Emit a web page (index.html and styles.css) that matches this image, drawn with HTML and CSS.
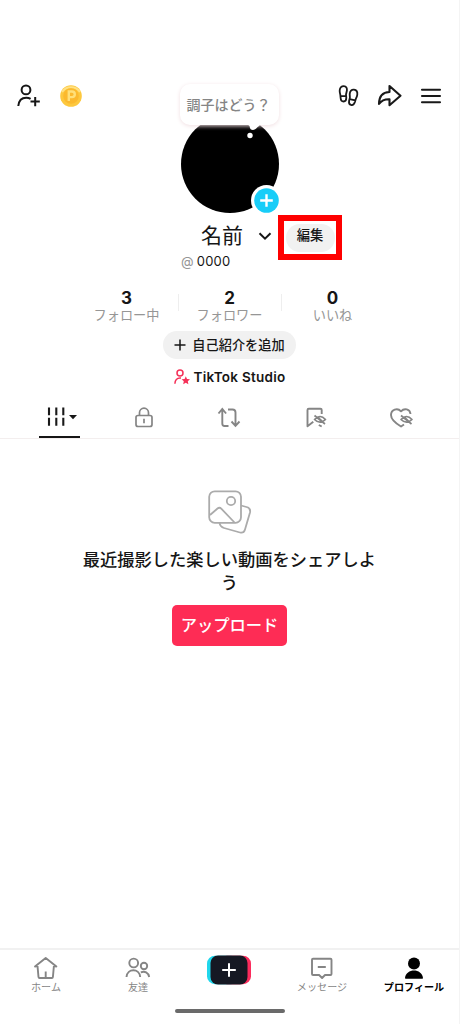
FILE: index.html
```html
<!DOCTYPE html>
<html lang="ja">
<head>
<meta charset="utf-8">
<title>プロフィール</title>
<link rel="stylesheet" href="styles.css">
</head>
<body>
<main class="screen">
  <header class="hero">
    <div class="actions actions-left">
      <svg width="26" height="26" viewBox="0 0 26 26" fill="none" stroke="#161616" stroke-width="2"><circle cx="10" cy="5.900" r="4.400"/><path d="M2.300 22c.5-5.400 3.400-8.300 7.900-8.300 1.800 0 3.200.4 4.400 1.200M14.500 17.500h9.300M19.200 12.900v9.300"/></svg>
      <svg width="22" height="22" viewBox="0 0 22 22"><circle cx="11" cy="11" r="10.800" fill="#fdc83e"/><path d="M2 7a10.800 10.800 0 0 1 18 0" fill="none" stroke="#ffe184" stroke-width="2"/><circle cx="11" cy="11" r="7.800" fill="#fbb92e"/><path d="M8.800 16V6.500h3.200a2.800 2.800 0 0 1 0 5.600H8.800" fill="none" stroke="#ffe07a" stroke-width="2.400"/></svg>
    </div>
    <div class="portrait">
      <div class="avatar"></div>
      <div class="bubble">調子はどう？</div>
      <svg class="tail" width="14" height="16" viewBox="0 0 14 16" fill="#fff"><path d="M0 0h14l-2 2c-3 2-3.500 4-6 4-2 0-3-1-3.500-4z"/><circle cx="3" cy="11.500" r="2.700"/></svg>
      <svg class="add" width="31" height="31" viewBox="0 0 31 31"><circle cx="15.500" cy="15.500" r="15.500" fill="#fff"/><circle cx="15.500" cy="15.500" r="12.300" fill="#18cdf8"/><path d="M9.200 15.500h12.600M15.500 9.200v12.600" stroke="#fff" stroke-width="2.400"/></svg>
    </div>
    <div class="actions actions-right">
      <svg width="22" height="24" viewBox="0 0 22 24" fill="none" stroke="#191919" stroke-width="1.800" stroke-linejoin="round"><path d="M6.800 2.100c2.500 0 3.400 2 3.100 4.400L9 10.500l.3 3.300c0 2.300-.8 3.700-2.700 3.700-2 0-2.900-1.500-3-3.800l-.3-3C2.800 9 2.500 7.700 2.700 6.200c.3-2.400 1.600-4.100 4.100-4.100zM3.500 12.100h5.600"/><path d="M17 5.700c2.500.3 3.600 2.300 3.300 5-.2 1.700-.9 3-1.500 4.200l-.9 3.200c-.7 2.200-1.900 3.300-3.800 2.900-1.900-.5-2.400-2-2-4.200l.8-3.200-.2-3.500c.1-2.800 1.900-4.700 4.300-4.400zM12.600 15.200l5.700 1.200"/></svg>
      <svg width="26" height="24" viewBox="0 0 26 24" fill="none" stroke="#191919" stroke-width="2.100" stroke-linejoin="round"><path d="M12.500 2v6C6.300 8.200 2 12 2 20c2.800-4 5.700-5 10.500-4.800v6L23.500 11.700z"/></svg>
      <svg width="20" height="24" viewBox="0 0 20 24" fill="none" stroke="#191919" stroke-width="2.100" stroke-linecap="round"><path d="M1 5.700h18M1 12h18M1 18.200h18"/></svg>
    </div>
  </header>

  <div class="name-row">
    <h1 class="name">名前</h1>
    <svg class="chevron" width="14" height="10" viewBox="0 0 14 10" fill="none" stroke="#161616" stroke-width="2"><path d="M1.500 1.200 7 6.700l5.500-5.500"/></svg>
    <div class="highlight"><button class="edit">編集</button></div>
  </div>
  <p class="handle"><span class="at">@</span>0000</p>

  <section class="stats">
    <div class="stat"><b>3</b><span>フォロー中</span></div>
    <div class="stat"><b>2</b><span>フォロワー</span></div>
    <div class="stat"><b>0</b><span>いいね</span></div>
  </section>

  <button class="bio">
    <svg width="12" height="12" viewBox="0 0 12 12" stroke="#161616" stroke-width="1.500"><path d="M.5 6h11M6 .5v11"/></svg>
    <span>自己紹介を追加</span>
  </button>
  <div class="studio">
    <svg width="16" height="16" viewBox="0 0 16 16" fill="none" stroke="#f53058" stroke-width="1.500"><circle cx="6" cy="4" r="3"/><path d="M.9 14.800c.2-3.500 1.900-5.800 5.100-5.800h1"/><path fill="#f53058" stroke="none" d="m11.800 7.300 1.200 2.700 3 .3-2.200 2 .6 2.900-2.600-1.500-2.600 1.500.6-2.900-2.200-2 3-.3z"/></svg>
    <span>TikTok Studio</span>
  </div>

  <nav class="tabs">
    <div class="tab tab-active"><svg width="32" height="22" viewBox="0 0 32 22"><path d="M5 2.500v7.800M12.300 2.500v7.800M19.300 2.500v7.800M5 12.700v8M12.300 12.700v8M19.300 12.700v8" stroke="#191919" stroke-width="2.100"/><path d="M25 10h8l-4 4.300z" fill="#161616"/></svg></div>
    <div class="tab"><svg width="20" height="22" viewBox="0 0 20 22" fill="none" stroke="#858585" stroke-width="1.700"><rect x="2" y="9.500" width="16" height="11" rx="2"/><path d="M5.500 9.500V6.700a4.500 4.500 0 0 1 9 0v2.800M10 12.800v4.500"/></svg></div>
    <div class="tab"><svg width="24" height="22" viewBox="0 0 24 22" fill="none" stroke="#858585" stroke-width="1.900"><path d="M1.500 7.500 5.300 3l3.800 4.500M5.300 3.500V17.500q0 2.500 2.200 2.500h4M11 3.500h4.500q3 0 3 3V19M14.500 15.500l4 4.300 4-4.300"/></svg></div>
    <div class="tab"><svg width="22" height="22" viewBox="0 0 22 22" fill="none" stroke="#858585" stroke-width="1.900" stroke-linejoin="round"><path d="M16.700 8V4q0-1.300-1.300-1.300H3.800Q2.500 2.700 2.500 4v16.200l5.800-4.400M13.800 19l2.900 1.500"/><path stroke-width="1.700" d="M9.500 13.500q5.500-6 11 0-5.500 5.500-11 0zM9.500 9.500l10.500 8.500M12.800 11l4.700 4.500"/></svg></div>
    <div class="tab"><svg width="24" height="22" viewBox="0 0 24 22" fill="none" stroke="#858585" stroke-width="1.900" stroke-linejoin="round"><path d="M21.500 8c-.5-5-6.200-6.300-9.500-2.700C8.500 1.300 2 3.500 2 9c0 4.800 4.200 8 10 11.500l3-2"/><path stroke-width="1.700" d="M12 13.500q5.500-6 11 0-5.500 5.500-11 0zM12 9.500l10.500 8.500M15.300 11l4.700 4.500"/></svg></div>
  </nav>

  <section class="empty">
    <svg width="44" height="45" viewBox="0 0 44 45" fill="none" stroke="#ababab" stroke-width="1.800"><rect x="1.200" y="1.300" width="31.800" height="31.500" rx="5.500"/><circle cx="23" cy="11" r="4.200"/><path d="m2 25 7.500-6.500q2-1.600 4 .3L26.500 32.500M33 15.500l5.500 1.500q4.500 1.200 3.500 5.500l-5 17q-1.200 4-5 3l-16-4.500q-4-1.200-4.500-5.300"/></svg>
    <p class="message">最近撮影した楽しい動画をシェアしよう</p>
    <button class="upload">アップロード</button>
  </section>

  <footer class="bottom">
    <div class="item"><svg width="26" height="24" viewBox="0 0 26 24" fill="none" stroke="#858585" stroke-width="1.900" stroke-linejoin="round"><path d="M4.500 11 2 11.500 12.700 3 23.400 11.500 20.900 11M4.500 11l1 11q.1 1 1 1h12.400q.9 0 1-1l1-11M12.700 16.500V23"/></svg><span>ホーム</span></div>
    <div class="item"><svg width="26" height="24" viewBox="0 0 26 24" fill="none" stroke="#858585" stroke-width="1.900"><circle cx="8.700" cy="8" r="4.400"/><circle cx="19" cy="11" r="3.200"/><path d="M1.500 22c.7-9 13-9 13.700 0M15.800 17.300c4-1.500 7.500.2 8.400 4.700"/></svg><span>友達</span></div>
    <div class="item"><svg class="create" width="44" height="30" viewBox="0 0 44 30"><rect width="32" height="28.500" x="0" y=".7" rx="8" fill="#20d7ec"/><rect x="12" y=".7" width="32" height="28.500" rx="8" fill="#fb2b5c"/><rect x="3.500" y=".5" width="37" height="29" rx="7.500" fill="#151823"/><path d="M15.200 15h13.600M22 8.200v13.600" stroke="#fff" stroke-width="2"/></svg></div>
    <div class="item"><svg width="26" height="24" viewBox="0 0 26 24" fill="none" stroke="#858585" stroke-width="1.900" stroke-linejoin="round"><path d="M4 3.700h17.500q1 0 1 1V19q0 1-1 1H16l-2.900 3-3-3H4q-1 0-1-1V4.700q0-1 1-1zM8.800 12h8"/></svg><span>メッセージ</span></div>
    <div class="item item-active"><svg width="26" height="24" viewBox="0 0 26 24"><circle cx="13" cy="8.600" r="6"/><path d="M4 23c1-10 17-10 18 0q0 .7-.7.700H4.700q-.7 0-.7-.7z"/></svg><span>プロフィール</span></div>
  </footer>
  <div class="indicator"></div>
</main>
</body>
</html>
```
FILE: styles.css
```css
* { box-sizing: border-box; margin: 0; }
body { background: #fff; color: #161616; font-family: "Noto Sans CJK JP", sans-serif; }
button { border: 0; padding: 0; font: inherit; color: inherit; }
svg { display: block; flex: none; overflow: visible; }

.screen { width: 460px; height: 1024px; padding-top: 84px; border-right: 1px solid #f4f4f4; display: flex; flex-direction: column; overflow: hidden; }

.hero { display: grid; grid-template-columns: 181px 98px 1fr; height: 130px; }
.actions { display: flex; align-items: flex-start; height: 26px; }
.actions-left { padding-left: 16px; gap: 18px; }
.actions-left svg:last-child { margin-top: 1px; }
.actions-right { padding-right: 18px; gap: 18px; justify-content: flex-end; }
.portrait { position: relative; padding-top: 31px; }
.avatar { width: 98px; height: 98px; border-radius: 50%; background: #000; }
.bubble { position: absolute; top: 0; left: -1px; width: 99px; height: 41px; padding-right: 2px; border-radius: 10px; background: #fff; box-shadow: 0 1px 4px #f1dfe2; color: #858585; font-size: 14px; font-weight: 500; line-height: 41px; text-align: center; white-space: nowrap; }
.tail { position: absolute; top: 40px; left: 66px; }
.add { position: absolute; top: 101px; left: 70px; }

.name-row { display: flex; align-items: center; height: 45px; padding-left: 201px; margin-top: 1px; }
.name { font-size: 21px; line-height: 40px; font-weight: 400; width: 42px; margin-top: -7px; white-space: nowrap; }
.chevron { margin: -2px 0 0 15px; }
.highlight { margin-left: 6px; width: 64px; height: 45px; border: 6px solid #fe0000; display: grid; place-items: center; }
.edit { width: 49px; height: 28px; border-radius: 14px; background: #f1f1f1; font-size: 13.300px; font-weight: 500; line-height: 22px; padding-bottom: 6px; }
.handle { padding-left: 181px; height: 18px; margin-top: -8px; font-family: Inter, sans-serif; font-size: 13px; line-height: 18px; display: flex; gap: 3px; letter-spacing: .2px; }
.at { color: #969696; }

.stats { display: grid; grid-template-columns: repeat(3, 103px); margin: 18px 0 0 75px; height: 43px; }
.stat { display: flex; flex-direction: column; align-items: center; position: relative; padding-top: 2px; }
.stat b { font: 700 17px/17px Inter, sans-serif; }
.stat span { font-size: 13.200px; line-height: 15px; color: #969696; }
.stat + .stat::before { content: ""; position: absolute; left: 0; top: 6px; height: 17px; border-left: 1px solid #eee; }

.bio { align-self: center; width: 133px; height: 28px; border-radius: 14px; background: #f1f1f1; display: flex; align-items: center; justify-content: center; gap: 6px; font-size: 13.200px; line-height: 24px; font-weight: 500; }
.bio span { margin-top: -1px; }
.studio { align-self: center; height: 36px; display: flex; align-items: center; gap: 4px; font: 600 13.500px/18px Inter, sans-serif; letter-spacing: .25px; }

.tabs { height: 44px; border-bottom: 1px solid #f3eeee; display: grid; grid-template-columns: 42px 122px 48px 126px 44px; padding-left: 41px; }
.tab { display: flex; align-items: center; justify-content: center; }
.tab-active { width: 41px; margin-left: -2px; border-bottom: 2px solid #161616; }

.empty { flex: 1; padding-top: 51px; display: flex; flex-direction: column; align-items: center; }
.message { width: 296px; margin: 12px 0 12px; font-size: 17.250px; font-weight: 500; line-height: 23px; text-align: center; }
.upload { width: 115px; height: 41px; border-radius: 5px; background: #fe2c55; color: #fff; font-size: 16.300px; font-weight: 500; line-height: 37px; padding-bottom: 2px; }

.bottom { height: 61px; border-top: 2px solid #f1f1f1; display: grid; grid-template-columns: repeat(5, 92px); margin-right: -1px; }
.item { padding-top: 5px; display: flex; flex-direction: column; align-items: center; color: #858585; font-size: 10.100px; line-height: 16px; }
.create { margin-left: -2px; }
.item-active { color: #000; font-weight: 700; }
.indicator { width: 110px; height: 4px; margin: 0 0 11px 175px; border-radius: 2px; background: #6a6a6a; }
```
